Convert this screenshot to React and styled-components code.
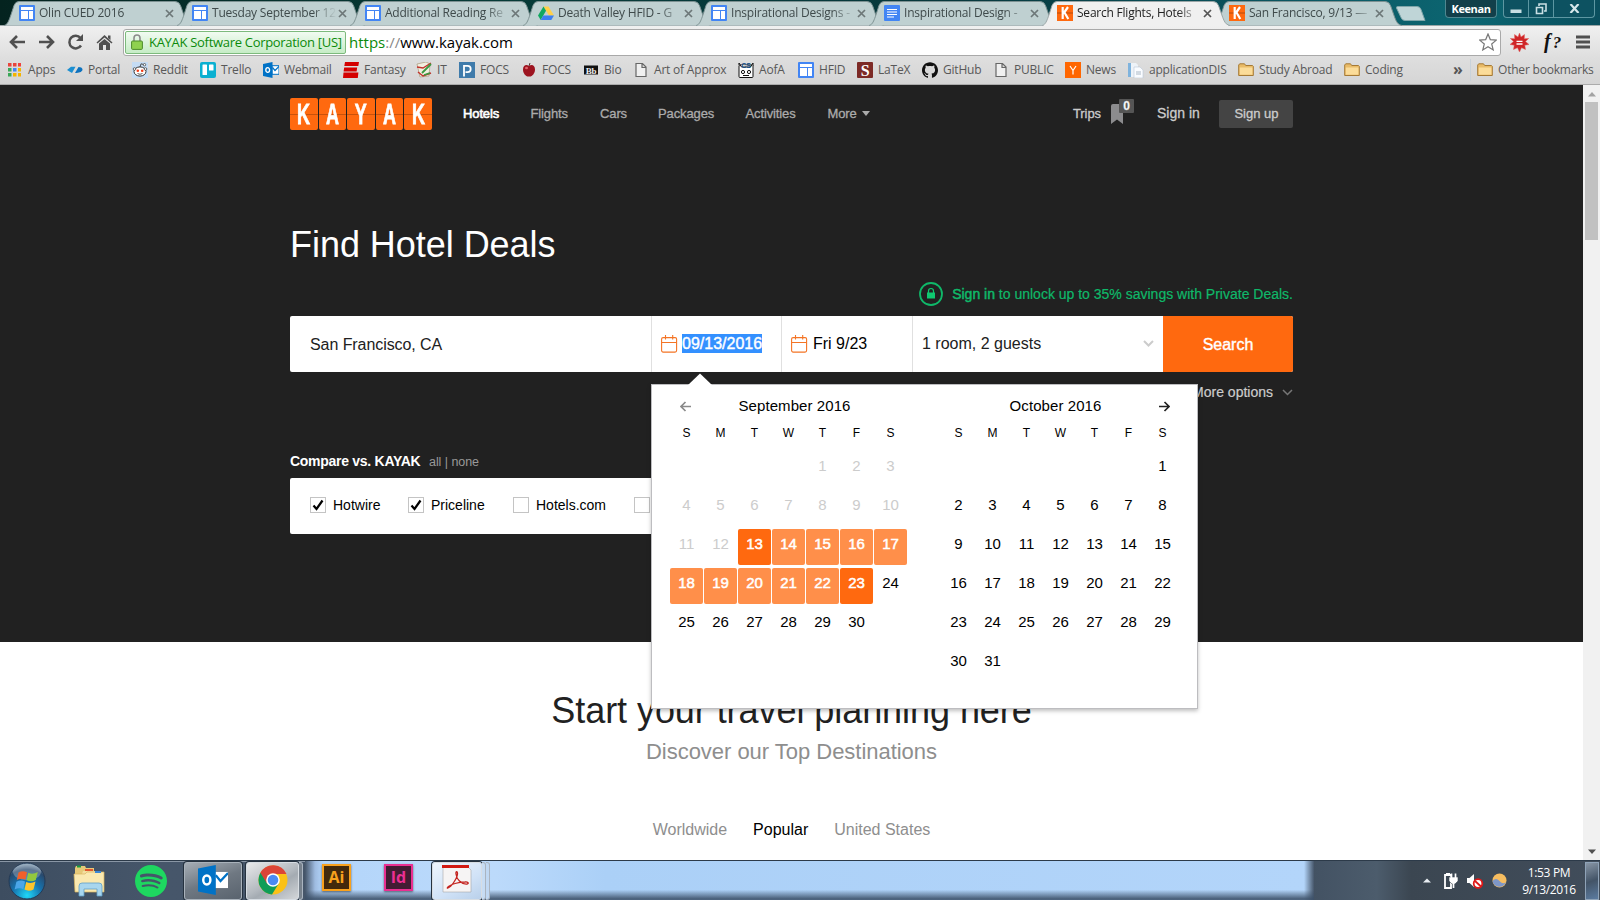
import React from 'react';
import styled, { createGlobalStyle } from 'styled-components';
import { SiSpotify, SiGithub } from 'react-icons/si';

const SANS = '"Liberation Sans", Arial, sans-serif';
const UI = '"Open Sans", "Noto Sans", sans-serif';

const Global = createGlobalStyle`
  *, *::before, *::after { box-sizing: border-box; }
  body { margin: 0; overflow: hidden; background: #fff; font-family: ${SANS}; }
`;

const Screen = styled.div`
  width: 1600px; height: 900px; overflow: hidden;
  display: flex; flex-direction: column;
`;

/* ---------- browser chrome ---------- */
const TabStrip = styled.div`
  height: 25px; flex: none; display: flex; align-items: flex-start;
  padding: 1px 0 0 3px;
  background: linear-gradient(90deg, #04231f 0%, #063b37 30%, #07383d 60%, #0a5560 80%, #0c6672 92%, #0a4f5e 100%);
`;
const TabBox = styled.div`
  position: relative; z-index: ${p => (p.$active ? 3 : 1)};
  width: 190px; height: 24px; margin-right: ${p => p.$gap || -17}px; flex: none;
  display: flex; align-items: center; padding: 0 12px 0 16px;
`;
const TabShape = styled.svg`position: absolute; left: 0; top: 0; z-index: -1;`;
const TabTitle = styled.span`
  width: 126px; margin-left: 4px; overflow: hidden; white-space: nowrap;
  font: 12px/18px ${UI}; letter-spacing: -0.22px; color: ${p => (p.$active ? '#222' : '#3f4a4b')};
  -webkit-mask-image: linear-gradient(90deg, #000 80%, transparent 99%);
  mask-image: linear-gradient(90deg, #000 80%, transparent 99%);
`;
const TabClose = styled.svg`flex: none;`;
const NewTab = styled.svg`margin: 5px 0 0 9px; flex: none;`;
const WindowTools = styled.div`
  display: flex; margin-left: auto; padding-right: 5px; gap: 6px; margin-top: -1px;
`;
const UserChip = styled.div`
  width: 52px; height: 18px; border: 1px solid #4f8790; border-top: 0; border-radius: 0 0 4px 4px;
  background: #123f4a; color: #fff; text-align: center; font: bold 11px/17px ${UI}; letter-spacing: -0.4px;
`;
const WinButtons = styled.div`
  display: flex; height: 18px; border: 1px solid #5d97a2; border-top: 0; border-radius: 0 0 4px 4px;
  background: #0d5261; overflow: hidden;
`;
const WinButton = styled.div`
  width: ${p => p.$w}px; display: flex; align-items: center; justify-content: center; padding-top: ${p => p.$drop || 0}px;
  & + & { border-left: 1px solid #5d97a2; }
`;

const Toolbar = styled.div`
  height: 33px; flex: none; display: flex; align-items: center; padding: 1px 10px 1px 8px;
  background: linear-gradient(#f0f0f0, #dedede);
  border-top: 1px solid #9aa5a6;
`;
const NavIcons = styled.div`display: flex; gap: 11px; width: 115px;`;
const Omnibox = styled.div`
  width: 1378px; height: 27px; border: 1px solid #a9a9a9; border-radius: 3px; background: #fff;
  display: flex; align-items: center; padding: 0 3px 0 1px;
`;
const EvBadge = styled.div`
  width: 221px; height: 23px; border: 1px solid #7dba7d; border-radius: 2px;
  background: linear-gradient(#f1fbf1, #c6ecc6); display: flex; align-items: center; padding-left: 5px; gap: 6px;
  color: #0b8a0b; font: 13px/20px ${UI}; letter-spacing: -0.3px; white-space: nowrap;
`;
const Url = styled.div`
  margin-left: 3px; flex: 1; font: 15px/22px ${UI}; letter-spacing: 0; color: #000;
  i { font-style: normal; color: #888; } b { font-weight: 400; color: #0b8a0b; }
`;
const ExtArea = styled.div`display: flex; align-items: center; margin-left: 9px; flex: 1;`;
const FxGlyph = styled.span`
  font: italic bold 20px/22px "Liberation Serif", serif; margin: 0 0 0 15px; width: 32px; color: #111; white-space: nowrap;
  span { font-size: 17px; margin-left: 2px; }
`;
const BookmarkBar = styled.div`
  height: 27px; flex: none; display: flex; align-items: center; padding-left: 7px; padding-bottom: 2px;
  background: linear-gradient(#dedede, #d5d5d5); border-bottom: 1px solid #ababab;
`;
const Bookmark = styled.div`
  width: ${p => p.$w}px; flex: none; display: flex; align-items: center; gap: ${p => p.$g || 5}px;
  font: 12px/18px ${UI}; letter-spacing: -0.2px; color: #585858; white-space: nowrap;
  svg { flex: none; }
`;
const Overflow = styled.span`width: 17px; margin-left: 34px; font: bold 16px/18px ${UI}; color: #555; padding-bottom: 3px;`;
const BarRule = styled.div`width: 1px; height: 22px; background: #c9d2da; margin-right: 6px;`;

/* ---------- page ---------- */
const Viewport = styled.div`height: 775px; flex: none; display: flex;`;
const Page = styled.div`width: 1583px; overflow: hidden; background: #fff;`;
const Hero = styled.section`height: 557px; background: #212121; position: relative; z-index: 1; padding: 0 290px;`;
const Header = styled.header`height: 56px; padding-top: 2px; display: flex; align-items: center; white-space: nowrap;`;
const Logo = styled.div`display: flex; gap: 1px; width: 142px; height: 32px; margin-right: 31px;`;
const LogoTile = styled.div`
  flex: 1; position: relative; border-radius: 2px; background: #ff690f; color: #fff;
  display: flex; align-items: center; justify-content: center; font: bold 29px/32px ${SANS};
  &::before { content: ''; position: absolute; left: 0; right: 0; top: 16px; height: 1px; background: #c9520b; }
  span { position: relative; transform: scaleX(.62); -webkit-text-stroke: .8px #fff; }
`;
const NavItem = styled.a`
  width: ${p => p.$w}px; font-size: 13px; line-height: 18px; letter-spacing: -0.12px;
  color: ${p => (p.$active ? '#fff' : '#ababab')};
  -webkit-text-stroke: ${p => (p.$active ? 0.6 : 0.3)}px currentColor;
  svg { margin: 0 0 2px 5px; }
`;
const Account = styled.div`display: flex; align-items: center; margin-left: auto; color: #ccc;`;
const Trips = styled.div`
  position: relative; width: 84px; font-size: 13px; display: flex; align-items: center; letter-spacing: -0.1px;
  -webkit-text-stroke: .3px #ccc;
  em { font-style: normal; padding-bottom: 2px; }
  svg { margin-left: 10px; }
`;
const TripCount = styled.span`
  position: absolute; left: 46px; top: -5px; width: 15px; height: 14px; border-radius: 1px; background: #555;
  color: #fff; font: bold 12px/14px ${SANS}; text-align: center;
`;
const SignIn = styled.a`width: 62px; font-size: 14px; -webkit-text-stroke: .3px #ccc; padding-bottom: 2px;`;
const SignUp = styled.a`
  width: 74px; height: 28px; border-radius: 2px; background: #444; text-align: center; font-size: 13px; line-height: 28px;
  -webkit-text-stroke: .3px #ccc; padding-left: 1px;
`;
const Title = styled.h1`margin: 82px 0 0; font-weight: 400; font-size: 36px; line-height: 44px; color: #fff; letter-spacing: -0.04px;`;
const Deals = styled.div`
  display: flex; align-items: center; justify-content: flex-end; gap: 9px; margin-top: 14px; height: 26px;
  color: #0fb869; font-size: 14px; line-height: 18px; white-space: nowrap; -webkit-text-stroke: .2px currentColor;
  b { font-weight: 400; -webkit-text-stroke: .5px currentColor; }
`;
const SearchForm = styled.div`
  position: relative; margin-top: 9px; height: 56px; width: 1003px; display: flex; background: #fff; border-radius: 2px;
  font-size: 16px; color: #212121;
`;
const Field = styled.div`
  width: ${p => p.$w}px; padding: 0 9px 1px; display: flex; align-items: center; border-left: 1px solid #e0e0e0;
  white-space: nowrap; gap: ${p => p.$g || 0}px; color: ${p => p.$c || '#212121'};
  &:first-child { border: 0; padding: 1px 20px 0; letter-spacing: -0.07px; }
`;
const Selected = styled.span`background: #3390ff; color: #fff; line-height: 19px; -webkit-text-stroke: .4px #fff;`;
const SearchButton = styled.div`
  width: 130px; background: #ff690f; color: #fff; display: flex; align-items: center; justify-content: center;
  border-radius: 0 2px 2px 0; -webkit-text-stroke: .4px #fff; padding-top: 1px;
`;
const Push = styled.span`flex: 1;`;
const MoreOptions = styled.div`
  display: flex; justify-content: flex-end; align-items: center; gap: 9px; height: 18px; margin-top: 11px;
  font-size: 14px; color: #ccc; width: 1003px; -webkit-text-stroke: .2px #ccc;
`;
const Compare = styled.div`
  margin-top: 52px; height: 18px; font: bold 14px/17px ${SANS}; color: #fff; letter-spacing: -0.28px;
  span { font-weight: 400; font-size: 12.5px; color: #999; margin-left: 5px; letter-spacing: -0.05px; }
`;
const Providers = styled.div`
  margin-top: 7px; height: 56px; width: 700px; background: #fff; border-radius: 2px; display: flex; align-items: center;
  padding: 0 20px 2px;
`;
const Provider = styled.label`
  width: ${p => p.$w}px; display: flex; align-items: center; gap: 7px; font-size: 14px; color: #000; white-space: nowrap;
`;
const Check = styled.span`
  width: 16px; height: 16px; border: 1px solid #c4c4c4; background: #fff; display: flex; align-items: center; justify-content: center;
`;

/* date picker overlay */
const Picker = styled.div`
  position: absolute; z-index: 5; left: 361px; top: 68px; width: 547px; height: 325px; background: #fff;
  border: 1px solid #bdbdc0; box-shadow: 0 2px 4px rgba(0,0,0,.25);
  display: flex; gap: 35px; padding: 11px 18px; color: #000;
`;
const PickerCaret = styled.svg`position: absolute; left: 36px; top: -12px;`;
const Month = styled.div`width: 237px; display: flex; flex-direction: column;`;
const MonthHead = styled.div`
  height: 20px; text-align: center; font-size: 15px; line-height: 20px; padding: 0 ${p => p.$end || 0}px 0 ${p => p.$start || 0}px;
  display: flex; align-items: center;
  span { flex: 1; letter-spacing: .08px; }
`;
const Week = styled.div`
  display: grid; grid-template-columns: repeat(7, 33px); column-gap: 1px; text-align: center;
`;
const DayNames = styled(Week)`font-size: 12px; line-height: 14px; margin: 10px 0 11px;`;
const Days = styled(Week)`row-gap: 3px;`;
const Day = styled.div`
  height: 36px; border-radius: 2px; font-size: 15px; line-height: 30px;
  background: ${p => ({ end: '#ff690f', range: '#ff8f4a' }[p.$kind] || 'transparent')};
  color: ${p => ({ end: '#fff', range: '#fff', past: '#ccc' }[p.$kind] || '#000')};
  -webkit-text-stroke: ${p => (p.$kind === 'end' || p.$kind === 'range' ? 0.5 : 0)}px currentColor;
`;

const Planning = styled.section`text-align: center; white-space: nowrap;`;
const PlanTitle = styled.h2`margin: 47px 0 0; font-weight: 400; font-size: 36px; line-height: 44px; color: #212121; letter-spacing: -0.06px;`;
const PlanSub = styled.p`margin: 5px 0 0; font-size: 22px; line-height: 28px; color: #8e8e8e; letter-spacing: -0.03px;`;
const PlanTabs = styled.div`
  display: flex; justify-content: center; gap: 26px; margin-top: 54px; font-size: 16px; line-height: 20px; color: #8e8e8e;
  b { font-weight: 400; color: #000; }
`;
const Scrollbar = styled.div`
  width: 17px; background: #f1f1f1; display: flex; flex-direction: column; align-items: center; padding: 7px 0 6px;
`;
const Thumb = styled.div`width: 13px; height: 138px; margin: 5px 0 auto; background: #c1c1c1;`;

/* ---------- taskbar ---------- */
const Taskbar = styled.div`
  height: 40px; flex: none; display: flex; align-items: stretch; border-top: 1px solid #2c3a49;
  box-shadow: inset 0 1px 0 #8996a5; background: linear-gradient(90deg, #3d4d60, #46566a 10%, #435263 100%);
`;
const LaunchArea = styled.div`display: flex; width: 305px; align-items: center; padding: 0 0 0 8px; flex: none;`;
const Slot = styled.div`width: ${p => p.$w}px; display: flex; align-items: center; flex: none;`;
const AppButton = styled.div`
  width: ${p => p.$w}px; height: 38px; display: flex; align-items: center; justify-content: center; flex: none;
  border: 1px solid ${p => p.$edge || '#d7dde3'}; border-radius: 3px; box-shadow: 0 0 0 1px #26323f;
  background: ${p => p.$bg}; margin-right: ${p => p.$m || 0}px; padding-bottom: ${p => p.$lift || 0}px;
`;
const StackEdge = styled.div`width: 4px; height: 38px; border: 1px solid #aab4c0; border-left: 0; border-radius: 0 3px 3px 0; background: ${p => p.$bg};`;
const LightArea = styled.div`
  width: 1009px; flex: none; display: flex; align-items: center; padding-left: 17px;
  background: linear-gradient(180deg, transparent 74%, rgba(60,80,104,.85) 96%),
    linear-gradient(90deg, #46566a 0, #9ebbe0 10px, #b3d5fa 18px, #bcdafb 190px, #abd0f7 300px, #b3d5fa 999px, #46566a 100%);
`;
const AdobeTile = styled.div`
  width: 29px; height: 27px; border: 2px solid ${p => p.$c}; background: ${p => p.$bg}; color: ${p => p.$c};
  font: bold 16px/22px ${UI}; text-align: center; margin: -6px ${p => p.$gap}px 0 0; box-shadow: 0 1px 2px rgba(0,0,0,.5);
`;
const Tray = styled.div`flex: 1; display: flex; align-items: center; background: linear-gradient(90deg, #435263 0%, #4c5c6c 22%, #3b4651 34%, #414d5b 100%);`;
const TrayIcons = styled.div`display: flex; align-items: center; padding-left: 109px; width: 205px; flex: none;`;
const Clock = styled.div`width: 60px; text-align: center; color: #fff; font: 12px/17px ${UI}; letter-spacing: -0.35px; white-space: nowrap;`;
const ShowDesktop = styled.div`
  width: 14px; height: 38px; margin-left: auto; margin-right: 1px; border: 1px solid #8fa3b8;
  background: linear-gradient(160deg, #8795a5, #435467 50%, #5b7ba0);
`;

/* ---------- drawings ---------- */
const Box16 = ({ children, w = 16 }) => <svg width={w} height="16" viewBox={`0 0 ${w} 16`}>{children}</svg>;
const Sites = () => (
  <Box16><rect width="16" height="16" rx="1" fill="#4285f4" /><path d="M2 2h12v3H2zM2 6h7v8H2zM10 6h4v8h-4z" fill="#fff" /></Box16>
);
const DocsIcon = () => (
  <Box16><rect width="16" height="16" rx="1" fill="#4285f4" /><path d="M3 4.5h10M3 7h10M3 9.5h10M3 12h7" stroke="#fff" strokeWidth="1.2" /></Box16>
);
const Drive = () => (
  <Box16><path d="M5.5 1.5h5L16 10.5h-5z" fill="#ffcf48" /><path d="M5.5 1.5L8 5.8 2.7 15 0 10.5z" fill="#11a861" /><path d="M5.3 10.5H16L13.3 15H2.7z" fill="#3d7ff0" /></Box16>
);
const KTile = () => (
  <Box16>
    <rect width="16" height="16" fill="#ff690f" /><path d="M0 8h16" stroke="#b84d0c" />
    <path d="M5.7 2v12M11 2L6.5 8.5M7.5 7.5L11.3 14" stroke="#fff" strokeWidth="2.2" fill="none" />
  </Box16>
);
const AppsIcon = () => (
  <Box16 w={14}>
    {['#e8453c', '#e8453c', '#f0423c', '#3aa757', '#4285f4', '#f4b400', '#3aa757', '#f4b400', '#f4b400'].map((c, i) => (
      <rect key={i} x={1 + (i % 3) * 5} y={1 + Math.floor(i / 3) * 5} width="3.5" height="3.5" fill={c} />
    ))}
  </Box16>
);
const Portal = () => <Box16><path d="M0 8l4-3.200h4.500L5 11z" fill="#1c8fd1" /><path d="M8 11l3.500-6c2 0 4 .8 4 2.600s-2.500 3.400-6 3.400z" fill="#0d72be" /></Box16>;
const Reddit = () => (
  <Box16>
    <rect width="16" height="16" fill="#c5dcf4" /><ellipse cx="8" cy="9.500" rx="6" ry="4.600" fill="#fff" stroke="#333" />
    <circle cx="2.500" cy="7" r="1.300" fill="#fff" stroke="#333" strokeWidth=".7" /><circle cx="13.500" cy="7" r="1.300" fill="#fff" stroke="#333" strokeWidth=".7" />
    <circle cx="5.800" cy="8.800" r="1.300" fill="#f33a15" /><circle cx="10.200" cy="8.800" r="1.300" fill="#f33a15" />
    <path d="M5.500 11.500q2.500 1.600 5 0M8 5l1-3.200 3 .8" fill="none" stroke="#333" strokeWidth=".8" /><circle cx="12.500" cy="2.700" r="1.200" fill="#fff" stroke="#333" strokeWidth=".7" />
  </Box16>
);
const Trello = () => <Box16><rect width="16" height="16" rx="2" fill="#0bb0d1" /><rect x="2.500" y="2.500" width="4.500" height="10.500" rx=".6" fill="#fff" /><rect x="9" y="2.500" width="4.500" height="6" rx=".6" fill="#fff" /></Box16>;
const Outlook = ({ s = 16 }) => (
  <svg width={s} height={s} viewBox="0 0 16 16">
    <path d="M9 3.700h7v8.600H9z" fill="#fff" stroke="#0072c6" strokeWidth={s > 20 ? 0 : 1} /><path d="M9.500 5.500l2.500 3 4-4.200" fill="none" stroke="#0072c6" strokeWidth="1.200" />
    <path d="M0 1.900L9.500 0v16L0 14.100z" fill="#0072c6" /><ellipse cx="4.700" cy="8" rx="1.900" ry="2.400" fill="none" stroke="#fff" strokeWidth="1.300" />
  </svg>
);
const Espn = () => <Box16><path d="M2 0H16l-.7 4H1.300zM1.200 5.400h13l-.6 4.200H.600zM.500 10.600h14.900L14.800 16H0z" fill="#d40000" /><path d="M1.500 4.500h14M1 10.100h14" stroke="#dadada" strokeWidth="0" /></Box16>;
const ItIcon = () => <Box16><path d="M1 2l9-2 4 2-1 12-9 1z" fill="#f1efe0" stroke="#a08b6a" strokeWidth=".6" /><path d="M1 5l6 1 8-5M2 10l5 4 8-3" stroke="#c2332c" strokeWidth="1.400" fill="none" /><path d="M6 11l9-9M8 13l6-2" stroke="#3d9a41" strokeWidth="1.800" /></Box16>;
const PFocs = () => <Box16><rect width="16" height="16" fill="#3f7bab" /><path d="M5 14.500V3.800h3.500a3.100 3.100 0 010 6.400H6.500" stroke="#fff" strokeWidth="1.800" fill="none" /></Box16>;
const Apple = () => <Box16 w={14}><path d="M7 4c3-2 6-.5 6 3.500S10 15 7 14.500C4 15 1 11.500 1 7.500S4 2 7 4z" fill="#9d1420" /><path d="M7 4l1-3" stroke="#533" /><ellipse cx="4.500" cy="6" rx="1.500" ry="1.200" fill="#e0636a" /></Box16>;
const BbIcon = () => <Box16><rect x="1" y="3.500" width="14" height="9" fill="#111" /><text x="8" y="11.500" textAnchor="middle" fontFamily="Liberation Serif" fontWeight="bold" fontSize="9" fill="#eee">Bb</text></Box16>;
const PageIcon = () => <Box16 w={12}><path d="M1 1.500h6.500l3.500 3.500v9.500H1zM7 1.500V5.500h4" fill="#f0f0f0" stroke="#666" strokeWidth="1.200" /></Box16>;
const Aofa = () => (
  <Box16><rect x="1" y="3" width="14" height="12.500" rx="1" fill="#fff" stroke="#111" /><path d="M1 3V1l2.500 4h9L15 1v3" fill="#fff" stroke="#111" />
    <circle cx="5" cy="10" r="1.600" fill="none" stroke="#111" /><circle cx="11" cy="10" r="1.600" fill="none" stroke="#111" /><path d="M5 13.500h6" stroke="#111" />
    <text x="8" y="6" textAnchor="middle" fontFamily="Liberation Sans" fontWeight="bold" fontSize="7" fill="#0b4b87">CS</text></Box16>
);
const ShareL = () => <Box16><rect width="16" height="16" rx="1" fill="#7d2a26" /><text x="8" y="13.500" textAnchor="middle" fontFamily="Liberation Serif" fontWeight="bold" fontSize="16" fill="#fff">S</text></Box16>;
const YNews = () => <Box16><rect width="16" height="16" fill="#ff6600" /><path d="M5 4l3 4.500L11 4M8 8.500V12.500" fill="none" stroke="#fff" strokeWidth="1.200" /></Box16>;
const AppDis = () => <Box16><path d="M0 1h8l2 2v12H0z" fill="#eef3f8" /><rect y="1" width="3" height="14" fill="#7fb3dd" /><path d="M6 5h6l3 3v8H6z" fill="#fafcff" stroke="#bac8d6" strokeWidth=".6" /><path d="M8 10h5M8 12h5" stroke="#aab8c6" /></Box16>;
const Folder = () => <Box16 w={16}><path d="M.700 13.500V3l1-1.200H6.500l1.200 1.700h6.800l.8.800v9.200z" fill="#e9bb68" stroke="#a57a36" /><path d="M1.800 5.500h12.600v7.200H1.800z" fill="#fbdc99" /></Box16>;
const Chevron = ({ c, w = 2 }) => <svg width="11" height="7" viewBox="0 0 11 7"><path d="M1 1l4.500 4.500L10 1" fill="none" stroke={c} strokeWidth={w} /></svg>;
const Calendar = () => (
  <svg width="17" height="18" viewBox="0 0 17 18"><rect x=".6" y="2.600" width="15" height="14.500" rx="1.500" fill="none" stroke="#f47425" strokeWidth="1.100" /><path d="M.6 7.500h15M4.500 0v4.500M11.700 0v4.500" stroke="#f47425" strokeWidth="1.100" /></svg>
);
const Arrow = ({ flip, c }) => (
  <svg width="11" height="11" viewBox="0 0 11 11"><path d={flip ? 'M0 5.500h10M5.500 1l4.500 4.500L5.500 10' : 'M11 5.500H1M5.500 1L1 5.500 5.500 10'} fill="none" stroke={c} strokeWidth="1.700" /></svg>
);
const WinLogo = () => (
  <svg width="38" height="38" viewBox="0 0 38 38">
    <defs><radialGradient id="orb" cx=".5" cy=".9" r=".9"><stop offset="0" stopColor="#1fd8f8" /><stop offset=".45" stopColor="#1673ae" /><stop offset=".8" stopColor="#29486b" /><stop offset="1" stopColor="#8fa9bd" /></radialGradient></defs>
    <circle cx="19" cy="19" r="18" fill="url(#orb)" stroke="#243a55" /><ellipse cx="19" cy="10" rx="14" ry="8" fill="#fff" opacity=".25" />
    <path d="M10.500 10.500q4-2.500 8.500-.3l-1.600 7.600q-4.200-2-8.600.2z" fill="#f0602a" /><path d="M20.300 10.800q4.500 2 9.500-.8l-2 8q-4.300 2.400-9.200.2z" fill="#92c83e" />
    <path d="M8.400 19.700q4.500-2.200 8.600-.2l-1.700 7.700q-4-2-8.700.3z" fill="#4ba6e8" /><path d="M18.200 20q4.600 2 9.300-.4l-2 7.800q-4.500 2.400-9 .2z" fill="#fdc52c" />
  </svg>
);
const Explorer = () => (
  <svg width="33" height="32" viewBox="0 0 33 32">
    <path d="M2 3l1-2h9l1 2h8v24H2z" fill="#e6c978" /><path d="M4 1.500h4" stroke="#1a9d3f" strokeWidth="2" /><path d="M10 6h14v20H3z" fill="#f3dfa0" /><path d="M12 5h8" stroke="#e4572e" strokeWidth="2" />
    <path d="M1 9h11l2-2h17v20H2z" fill="#fae9b0" stroke="#d8b55e" strokeWidth=".7" /><path d="M22 7h6" stroke="#3b87d6" strokeWidth="2" />
    <path d="M6 31V21q0-3 3-3h17q3 0 3 3v10h-5v-7H11v7z" fill="#a8d6ee" stroke="#5fa0c6" strokeWidth=".8" />
  </svg>
);
const Chrome = () => (
  <svg width="30" height="30" viewBox="0 0 30 30">
    <circle cx="15" cy="15" r="14.500" fill="#fbc116" />
    <path d="M15 15L2.400 7.800A14.500 14.500 0 0014 29.500L21 18z" fill="#0f9d58" /><path d="M2.400 7.800L9 18.500 15 9h13.500A14.500 14.500 0 002.400 7.800z" fill="#db4437" />
    <circle cx="15" cy="15" r="6.800" fill="#fff" /><circle cx="15" cy="15" r="5.300" fill="#4a8af4" />
  </svg>
);
const Acrobat = () => (
  <svg width="30" height="28" viewBox="0 0 30 28"><path d="M1 1h24l4 4v22H1z" fill="#f6f4f4" stroke="#999" strokeWidth=".5" /><path d="M0 0h27v3H0z" fill="#d21a12" />
    <path d="M6 23c3-1 9-9 9.500-14 .2-3-2-3-1.500 0C14.500 14 19 19.500 25 19c2.500-.5 1-2.300-2-2C16 17 9 19.500 6.500 21.500 5 23 5 23.500 6 23z" fill="none" stroke="#c4231f" strokeWidth="1.300" /></svg>
);

const Tab = ({ icon, title, active, gap }) => (
  <TabBox $active={active} $gap={gap}>
    <TabShape width="190" height="25" viewBox="0 0 190 25">
      <path d="M1 24.500C5 23.500 6 20 11 4.500Q12.500.5 16 .5H172Q176 .5 177.500 4.500C182.500 18 183 23.500 189 24.500" fill={active ? '#f0f0f0' : '#bfd0d1'} stroke={active ? '#9aa5a6' : '#7d9192'} />
      {active && <path d="M3 24.500H187" stroke="#f0f0f0" />}
    </TabShape>
    {icon}
    <TabTitle $active={active}>{title}</TabTitle>
    <TabClose width="9" height="9" viewBox="0 0 9 9"><path d="M1 1l7 7M8 1L1 8" stroke={active ? '#555' : '#6d7778'} strokeWidth="1.700" /></TabClose>
  </TabBox>
);

const bookmarks = [
  [<AppsIcon />, 'Apps', 60, 7], [<Portal />, 'Portal', 65, 5], [<Reddit />, 'Reddit', 68], [<Trello />, 'Trello', 63],
  [<Outlook />, 'Webmail', 80], [<Espn />, 'Fantasy', 73], [<ItIcon />, 'IT', 43], [<PFocs />, 'FOCS', 63],
  [<Apple />, 'FOCS', 61, 6], [<BbIcon />, 'Bio', 52], [<PageIcon />, 'Art of Approx', 103, 7], [<Aofa />, 'AofA', 60],
  [<Sites />, 'HFID', 59], [<ShareL />, 'LaTeX', 65], [<SiGithub size={16} color="#111" />, 'GitHub', 73], [<PageIcon />, 'PUBLIC', 70, 7],
  [<YNews />, 'News', 63], [<AppDis />, 'applicationDIS', 110], [<Folder />, 'Study Abroad', 106], [<Folder />, 'Coding', 75],
];

const dayNames = ['S', 'M', 'T', 'W', 'T', 'F', 'S'];
const kindOf = d => (d < 13 ? 'past' : d === 13 || d === 23 ? 'end' : d < 23 ? 'range' : '');
const MonthGrid = ({ blanks, count, kind }) => (
  <>
    <DayNames>{dayNames.map((n, i) => <span key={i}>{n}</span>)}</DayNames>
    <Days>
      {Array.from({ length: blanks }, (_, i) => <Day key={`b${i}`} />)}
      {Array.from({ length: count }, (_, i) => <Day key={i} $kind={kind ? kind(i + 1) : ''}>{i + 1}</Day>)}
    </Days>
  </>
);

const Tick = () => <svg width="12" height="12" viewBox="0 0 12 12"><path d="M1.500 6.500l3 3.500L10.500 1.500" fill="none" stroke="#000" strokeWidth="2.200" /></svg>;

function BrowserChrome() {
  return (
    <>
      <TabStrip>
        <Tab icon={<Sites />} title="Olin CUED 2016" />
        <Tab icon={<Sites />} title="Tuesday September 12" />
        <Tab icon={<Sites />} title="Additional Reading Re" />
        <Tab icon={<Drive />} title="Death Valley HFID - G" />
        <Tab icon={<Sites />} title="Inspirational Designs -" />
        <Tab icon={<DocsIcon />} title="Inspirational Design -" />
        <Tab icon={<KTile />} title="Search Flights, Hotels" active gap={-18} />
        <Tab icon={<KTile />} title="San Francisco, 9/13 —" />
        <NewTab width="31" height="15" viewBox="0 0 31 15"><path d="M3 .5H22q3 0 4 3l4 11H10q-3 0-4-3L1.500 2Q1 .5 3 .5z" fill="#bfd5d7" stroke="#7fa5a9" /></NewTab>
        <WindowTools>
          <UserChip>Keenan</UserChip>
          <WinButtons>
            <WinButton $w={24} $drop={4}><svg width="12" height="6"><rect x=".5" y="1.500" width="11" height="3.500" fill="#c9dfe4" /></svg></WinButton>
            <WinButton $w={25}><svg width="12" height="12"><path d="M4 3V1h7v7H9M1.500 4.500h6v6h-6z" fill="none" stroke="#c9dfe4" strokeWidth="1.600" /></svg></WinButton>
            <WinButton $w={41}><svg width="11" height="9"><path d="M1.500 0l8 9M9.500 0l-8 9" stroke="#d5e6ea" strokeWidth="2.200" /></svg></WinButton>
          </WinButtons>
        </WindowTools>
      </TabStrip>
      <Toolbar>
        <NavIcons>
          <svg width="18" height="18" viewBox="0 0 18 18"><path d="M17 9H3M9 3L3 9l6 6" fill="none" stroke="#505050" strokeWidth="2.600" /></svg>
          <svg width="18" height="18" viewBox="0 0 18 18"><path d="M2 9h14M10 3l6 6-6 6" fill="none" stroke="#505050" strokeWidth="2.600" /></svg>
          <svg width="18" height="18" viewBox="0 0 18 18"><path d="M15 12.500A6.300 6.300 0 1114.500 5" fill="none" stroke="#505050" strokeWidth="2.500" /><path d="M17 1v7H10z" fill="#505050" /></svg>
          <svg width="18" height="18" viewBox="0 0 18 18"><path d="M9.500 2l8 7.500-1 1-7-6-7 6-1-1zM13 2.500h2.500V7L13 5zM4 10.500L9.500 6l5.500 4.500V17h-4v-5H8v5H4z" fill="#505050" /></svg>
        </NavIcons>
        <Omnibox>
          <EvBadge>
            <svg width="12" height="16" viewBox="0 0 12 16"><path d="M3 8V4a3 3 0 016 0v4" fill="none" stroke="#8c8c8c" strokeWidth="1.600" /><rect x=".6" y="7" width="10.800" height="8.400" rx="1" fill="#8fd14f" stroke="#4d8b2b" /></svg>
            KAYAK Software Corporation [US]
          </EvBadge>
          <Url><b>https</b><i>://</i>www.kayak.com</Url>
          <svg width="18" height="18" viewBox="0 0 18 18"><path d="M9 1l2.300 5.600 6 .5-4.600 3.900 1.500 5.900L9 13.700 3.800 16.900 5.300 11 .7 7.100l6-.5z" fill="#fff" stroke="#777" strokeWidth="1.200" /></svg>
        </Omnibox>
        <ExtArea>
          <svg width="19" height="19" viewBox="0 0 19 19"><path d="M9.500 0l1.500 4L14.500 1.500 14.300 5.700 18.700 5.500 15.500 8.500 19 11.500 14.800 12.200 15.500 16.500 11.500 14.700 9.500 19 7.500 14.700 3.500 16.500 4.200 12.200 0 11.500 3.500 8.500.3 5.500 4.700 5.700 4.500 1.500 8 4z" fill="#cf2527" stroke="#e2605f" strokeWidth=".5" /><path d="M6.500 8.300h6M6.500 11h6" stroke="#fff" strokeWidth="1.300" /></svg>
          <FxGlyph>f<span>?</span></FxGlyph>
          <svg width="14" height="14" viewBox="0 0 14 14"><path d="M0 2h14M0 7h14M0 12h14" stroke="#505050" strokeWidth="2.800" /></svg>
        </ExtArea>
      </Toolbar>
      <BookmarkBar>
        {bookmarks.map(([icon, name, w, g], i) => <Bookmark key={i} $w={w} $g={g}>{icon}{name}</Bookmark>)}
        <Overflow>»</Overflow>
        <BarRule />
        <Bookmark $w={120}><Folder />Other bookmarks</Bookmark>
      </BookmarkBar>
    </>
  );
}

function DatePicker() {
  return (
    <Picker>
      <PickerCaret width="24" height="13" viewBox="0 0 24 13"><path d="M0 12L12 .5 24 12v1H0z" fill="#fff" /></PickerCaret>
      <Month>
        <MonthHead $start={10} $end={9}><Arrow c="#8a8a8a" /><span>September 2016</span></MonthHead>
        <MonthGrid blanks={4} count={30} kind={kindOf} />
      </Month>
      <Month>
        <MonthHead $start={10} $end={9}><span>October 2016</span><Arrow flip c="#222" /></MonthHead>
        <MonthGrid blanks={6} count={31} />
      </Month>
    </Picker>
  );
}

function KayakHero() {
  return (
    <Hero>
      <Header>
        <Logo>{'KAYAK'.split('').map((l, i) => <LogoTile key={i}><span>{l}</span></LogoTile>)}</Logo>
        <NavItem $w={67.5} $active>Hotels</NavItem>
        <NavItem $w={69.5}>Flights</NavItem>
        <NavItem $w={58}>Cars</NavItem>
        <NavItem $w={87.5}>Packages</NavItem>
        <NavItem $w={82}>Activities</NavItem>
        <NavItem $w={60}>More<svg width="8" height="5"><path d="M0 0h8L4 5z" fill="#ababab" /></svg></NavItem>
        <Account>
          <Trips><em>Trips</em><svg width="12" height="20"><path d="M0 2Q0 0 2 0H12V20L6 15.500 0 20z" fill="#8c8c8e" /></svg><TripCount>0</TripCount></Trips>
          <SignIn>Sign in</SignIn>
          <SignUp>Sign up</SignUp>
        </Account>
      </Header>
      <Title>Find Hotel Deals</Title>
      <Deals>
        <svg width="24" height="24" viewBox="0 0 24 24"><circle cx="12" cy="12" r="11" fill="none" stroke="#0fb869" strokeWidth="1.800" /><rect x="8" y="10.500" width="8" height="6" fill="#0fc870" /><path d="M9.500 11V9a2.500 2.500 0 015 0v2" fill="none" stroke="#0fc870" strokeWidth="1.200" /></svg>
        <span><b>Sign in</b> to unlock up to 35% savings with Private Deals.</span>
      </Deals>
      <SearchForm>
        <Field $w={361}>San Francisco, CA</Field>
        <Field $w={130} $g={4}><Calendar /><Selected>09/13/2016</Selected></Field>
        <Field $w={131} $g={5} $c="#000"><Calendar />Fri 9/23</Field>
        <Field $w={251}>1 room, 2 guests<Push /><Chevron c="#ccc" /></Field>
        <SearchButton>Search</SearchButton>
        <DatePicker />
      </SearchForm>
      <MoreOptions>More options<Chevron c="#777" w={1.5} /></MoreOptions>
      <Compare>Compare vs. KAYAK <span>all | none</span></Compare>
      <Providers>
        <Provider $w={98}><Check><Tick /></Check>Hotwire</Provider>
        <Provider $w={105}><Check><Tick /></Check>Priceline</Provider>
        <Provider $w={121}><Check />Hotels.com</Provider>
        <Provider $w={20}><Check /></Provider>
      </Providers>
    </Hero>
  );
}

function WindowsTaskbar() {
  return (
    <Taskbar>
      <LaunchArea>
        <Slot $w={65}><WinLogo /></Slot>
        <Slot $w={62}><Explorer /></Slot>
        <Slot $w={49}><SiSpotify size={32} color="#1ed760" /></Slot>
        <AppButton $w={58} $m={4} $lift={2} $edge="#a9b2bb" $bg="linear-gradient(160deg,#a5adb5,#6f7882 50%,#59636e)"><Outlook s={30} /></AppButton>
        <AppButton $w={53} $lift={1} $bg="linear-gradient(150deg,#e8e9ea,#b3b9bf 50%,#a4abb2 60%,#d3d6d9)"><Chrome /></AppButton>
        <StackEdge $bg="#77818c" />
      </LaunchArea>
      <LightArea>
        <AdobeTile $c="#f8a11d" $bg="#42290c" $gap={33}>Ai</AdobeTile>
        <AdobeTile $c="#ea2f92" $bg="#421c33" $gap={19}>Id</AdobeTile>
        <AppButton $w={50} $lift={3} $bg="linear-gradient(150deg,#eef5fd,#d0e2f7 60%,#b9d0ea)"><Acrobat /></AppButton>
        <StackEdge $bg="#c7dcf3" /><StackEdge $bg="#c0d8f3" />
      </LightArea>
      <Tray>
        <TrayIcons>
          <svg width="21" height="5"><path d="M0 4.500L4 .5 8 4.500z" fill="#e8edf2" /></svg>
          <svg width="23" height="17" viewBox="0 0 23 17"><path d="M2 2h4M1 3h6v13H1z" fill="none" stroke="#fff" strokeWidth="1.800" /><path d="M5 5h9v4l-3 3H8L5 9z" fill="#fff" stroke="#3b4651" strokeWidth=".6" /><path d="M7.500 1.500V6M11.500 1.500V6M9.500 11v5" stroke="#fff" strokeWidth="1.700" /></svg>
          <svg width="25" height="16" viewBox="0 0 25 16"><path d="M0 5h2.500L7 1v13L2.500 10H0z" fill="#fff" /><circle cx="11" cy="10.500" r="4.300" fill="#fff" stroke="#e01818" strokeWidth="1.800" /><path d="M8 8l6 5.500" stroke="#e01818" strokeWidth="1.800" /></svg>
          <svg width="15" height="15" viewBox="0 0 15 15"><circle cx="7.500" cy="7.500" r="7" fill="#f6bd60" /><path d="M.5 8q3.500-4 7 0t6.500 1A7 7 0 01.5 8z" fill="#7e97c8" /></svg>
        </TrayIcons>
        <Clock>1:53 PM<br />9/13/2016</Clock>
        <ShowDesktop />
      </Tray>
    </Taskbar>
  );
}

export default function App() {
  return (
    <Screen>
      <Global />
      <BrowserChrome />
      <Viewport>
        <Page>
          <KayakHero />
          <Planning>
            <PlanTitle>Start your travel planning here</PlanTitle>
            <PlanSub>Discover our Top Destinations</PlanSub>
            <PlanTabs><span>Worldwide</span><b>Popular</b><span>United States</span></PlanTabs>
          </Planning>
        </Page>
        <Scrollbar>
          <svg width="8" height="5"><path d="M0 4.500L4 0l4 4.500z" fill="#a3a3a3" /></svg>
          <Thumb />
          <svg width="8" height="5"><path d="M0 .5h8L4 5z" fill="#505050" /></svg>
        </Scrollbar>
      </Viewport>
      <WindowsTaskbar />
    </Screen>
  );
}
